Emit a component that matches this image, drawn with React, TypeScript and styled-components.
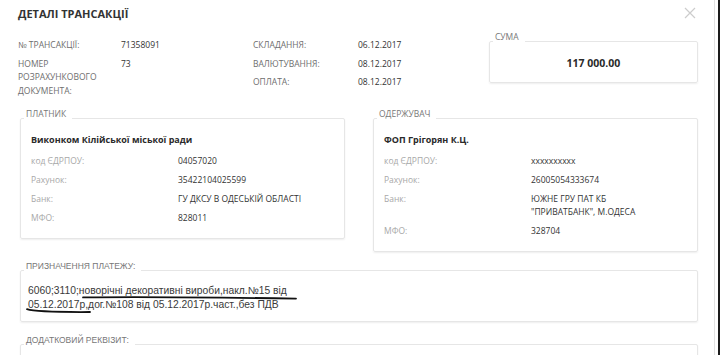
import React from 'react';
import styled, { createGlobalStyle } from 'styled-components';

const GlobalStyle = createGlobalStyle`
  html, body {
    margin: 0;
    padding: 0;
    background: #ffffff;
  }
  body {
    font-family: 'Open Sans', 'Noto Sans', sans-serif;
    color: #333333;
  }
`;

const Screen = styled.div`
  width: 720px;
  height: 355px;
  overflow: hidden;
  display: flex;
  background: #ffffff;
`;

const Modal = styled.div`
  width: 714px;
  height: 355px;
  border-right: 1px solid #e2e2e2;
  box-sizing: content-box;
`;

const Edge = styled.div`
  width: 2px;
  margin-left: 3px;
  background: #1c1c1c;
`;

const Header = styled.div`
  display: flex;
  justify-content: space-between;
  align-items: flex-start;
  padding: 6px 18px 0 18px;
  height: 26px;
`;

const Title = styled.div`
  font-size: 11px;
  font-weight: 700;
  line-height: 16px;
  color: #333;
`;

const Close = styled.button`
  border: none;
  background: none;
  padding: 0;
  margin-top: 1px;
  width: 12px;
  height: 12px;
  color: #cccccc;
`;

const InfoRow = styled.div`
  display: flex;
  align-items: flex-start;
  padding: 0 16px 0 18px;
`;

const KeyValues = styled.div<{ $label: number; $value: number }>`
  display: grid;
  grid-template-columns: ${p => p.$label}px ${p => p.$value}px;
  row-gap: 5px;
  padding-top: 6px;
`;

const InfoLabel = styled.div`
  font-size: 8.5px;
  line-height: 13.5px;
  color: #6e6e6e;
  padding-right: 10px;
`;

const InfoValue = styled.div`
  font-size: 8.5px;
  line-height: 13.5px;
  color: #333;
`;

const Box = styled.fieldset<{ $width?: number }>`
  margin: 0;
  padding: 0;
  min-width: 0;
  width: ${p => (p.$width ? `${p.$width}px` : 'auto')};
  box-sizing: border-box;
  border: 1px solid #e6e6e6;
  border-radius: 2px;
  box-shadow: 0 1px 2px rgba(0, 0, 0, 0.07);
  background: #fff;
`;

const Legend = styled.legend<{ $arial?: boolean }>`
  margin-left: 3px;
  padding: 0 6px 8px 2px;
  font-family: ${p => (p.$arial ? "'Liberation Sans', Arial, sans-serif" : "'Open Sans', sans-serif")};
  font-size: 8.5px;
  line-height: 10px;
  color: #777;
`;

const SumValue = styled.div`
  text-align: center;
  font-size: 10.5px;
  font-weight: 700;
  line-height: 14px;
  padding: 6px 0 12px;
  color: #2a2a2a;
`;

const Parties = styled.div`
  display: flex;
  justify-content: space-between;
  align-items: flex-start;
  margin: 12px 16px 0 20px;
`;

const PartyBody = styled.div`
  padding: 6px 10px 14px 10px;
`;

const PartyName = styled.div`
  font-size: 9px;
  font-weight: 700;
  line-height: 13px;
  color: #2a2a2a;
  margin-bottom: 8px;
`;

const PartyGrid = styled.div`
  display: grid;
  grid-template-columns: 147px 1fr;
  row-gap: 6px;
`;

const PartyLabel = styled.div`
  font-size: 8.5px;
  line-height: 13px;
  color: #a8a8a8;
`;

const PartyValue = styled.div`
  font-size: 8.5px;
  line-height: 13px;
  color: #333;
`;

const Wide = styled.div<{ $top: number }>`
  margin: ${p => p.$top}px 16px 0 20px;
`;

const PurposeText = styled.div`
  position: relative;
  font-family: 'Liberation Sans', Arial, sans-serif;
  font-size: 10.3px;
  line-height: 14px;
  color: #3a3a3a;
  padding: 5px 8px 9px 7px;
`;

const Inner = styled.div`
  position: relative;
  width: 270px;
`;

const Scribble = styled.svg`
  position: absolute;
  left: 0;
  top: 0;
  overflow: visible;
  pointer-events: none;
`;

const EmptyBody = styled.div`
  height: 20px;
`;

type Row = { label: string; value: React.ReactNode };

const Party = ({ legend, name, rows }: { legend: string; name: string; rows: Row[] }) => (
  <Box $width={325}>
    <Legend>{legend}</Legend>
    <PartyBody>
      <PartyName>{name}</PartyName>
      <PartyGrid>
        {rows.map(r => (
          <React.Fragment key={r.label}>
            <PartyLabel>{r.label}</PartyLabel>
            <PartyValue>{r.value}</PartyValue>
          </React.Fragment>
        ))}
      </PartyGrid>
    </PartyBody>
  </Box>
);

const App = () => {
  return (
    <Screen>
      <GlobalStyle />
      <Modal>
        <Header>
          <Title>ДЕТАЛІ ТРАНСАКЦІЇ</Title>
          <Close aria-label="close">
            <svg width="12" height="12" viewBox="0 0 12 12">
              <path d="M1 1 L11 11 M11 1 L1 11" stroke="currentColor" strokeWidth="1.2" fill="none" />
            </svg>
          </Close>
        </Header>

        <InfoRow>
          <KeyValues $label={103} $value={132}>
            <InfoLabel>№ ТРАНСАКЦІЇ:</InfoLabel>
            <InfoValue>71358091</InfoValue>
            <InfoLabel>НОМЕР РОЗРАХУНКОВОГО ДОКУМЕНТА:</InfoLabel>
            <InfoValue>73</InfoValue>
          </KeyValues>
          <KeyValues $label={105} $value={131}>
            <InfoLabel>СКЛАДАННЯ:</InfoLabel>
            <InfoValue>06.12.2017</InfoValue>
            <InfoLabel>ВАЛЮТУВАННЯ:</InfoLabel>
            <InfoValue>08.12.2017</InfoValue>
            <InfoLabel>ОПЛАТА:</InfoLabel>
            <InfoValue>08.12.2017</InfoValue>
          </KeyValues>
          <Box $width={209}>
            <Legend>СУМА</Legend>
            <SumValue>117 000.00</SumValue>
          </Box>
        </InfoRow>

        <Parties>
          <Party
            legend="ПЛАТНИК"
            name="Виконком Кілійської міської ради"
            rows={[
              { label: 'код ЄДРПОУ:', value: '04057020' },
              { label: 'Рахунок:', value: '35422104025599' },
              { label: 'Банк:', value: 'ГУ ДКСУ В ОДЕСЬКІЙ ОБЛАСТІ' },
              { label: 'МФО:', value: '828011' },
            ]}
          />
          <Party
            legend="ОДЕРЖУВАЧ"
            name="ФОП Грігорян К.Ц."
            rows={[
              { label: 'код ЄДРПОУ:', value: 'xxxxxxxxxx' },
              { label: 'Рахунок:', value: '26005054333674' },
              {
                label: 'Банк:',
                value: (
                  <>
                    ЮЖНЕ ГРУ ПАТ КБ
                    <br />
                    "ПРИВАТБАНК", М.ОДЕСА
                  </>
                ),
              },
              { label: 'МФО:', value: '328704' },
            ]}
          />
        </Parties>

        <Wide $top={9}>
          <Box>
            <Legend $arial>ПРИЗНАЧЕННЯ ПЛАТЕЖУ:</Legend>
            <PurposeText>
              <Inner>
                6060;3110;новорічні декоративні вироби,накл.№15 від 05.12.2017р,дог.№108 від 05.12.2017р.част.,без ПДВ
                <Scribble width="280" height="32">
                  <path
                    d="M55 13.4 C 110 12.8, 190 13.4, 268 14.6"
                    stroke="#111"
                    strokeWidth="1.8"
                    fill="none"
                    strokeLinecap="round"
                  />
                  <path
                    d="M-1 25.2 C 6 27.6, 25 28.2, 62 28"
                    stroke="#111"
                    strokeWidth="1.8"
                    fill="none"
                    strokeLinecap="round"
                  />
                </Scribble>
              </Inner>
            </PurposeText>
          </Box>
        </Wide>

        <Wide $top={13}>
          <Box>
            <Legend $arial>ДОДАТКОВИЙ РЕКВІЗИТ:</Legend>
            <EmptyBody />
          </Box>
        </Wide>
      </Modal>
      <Edge />
    </Screen>
  );
};

export default App;
